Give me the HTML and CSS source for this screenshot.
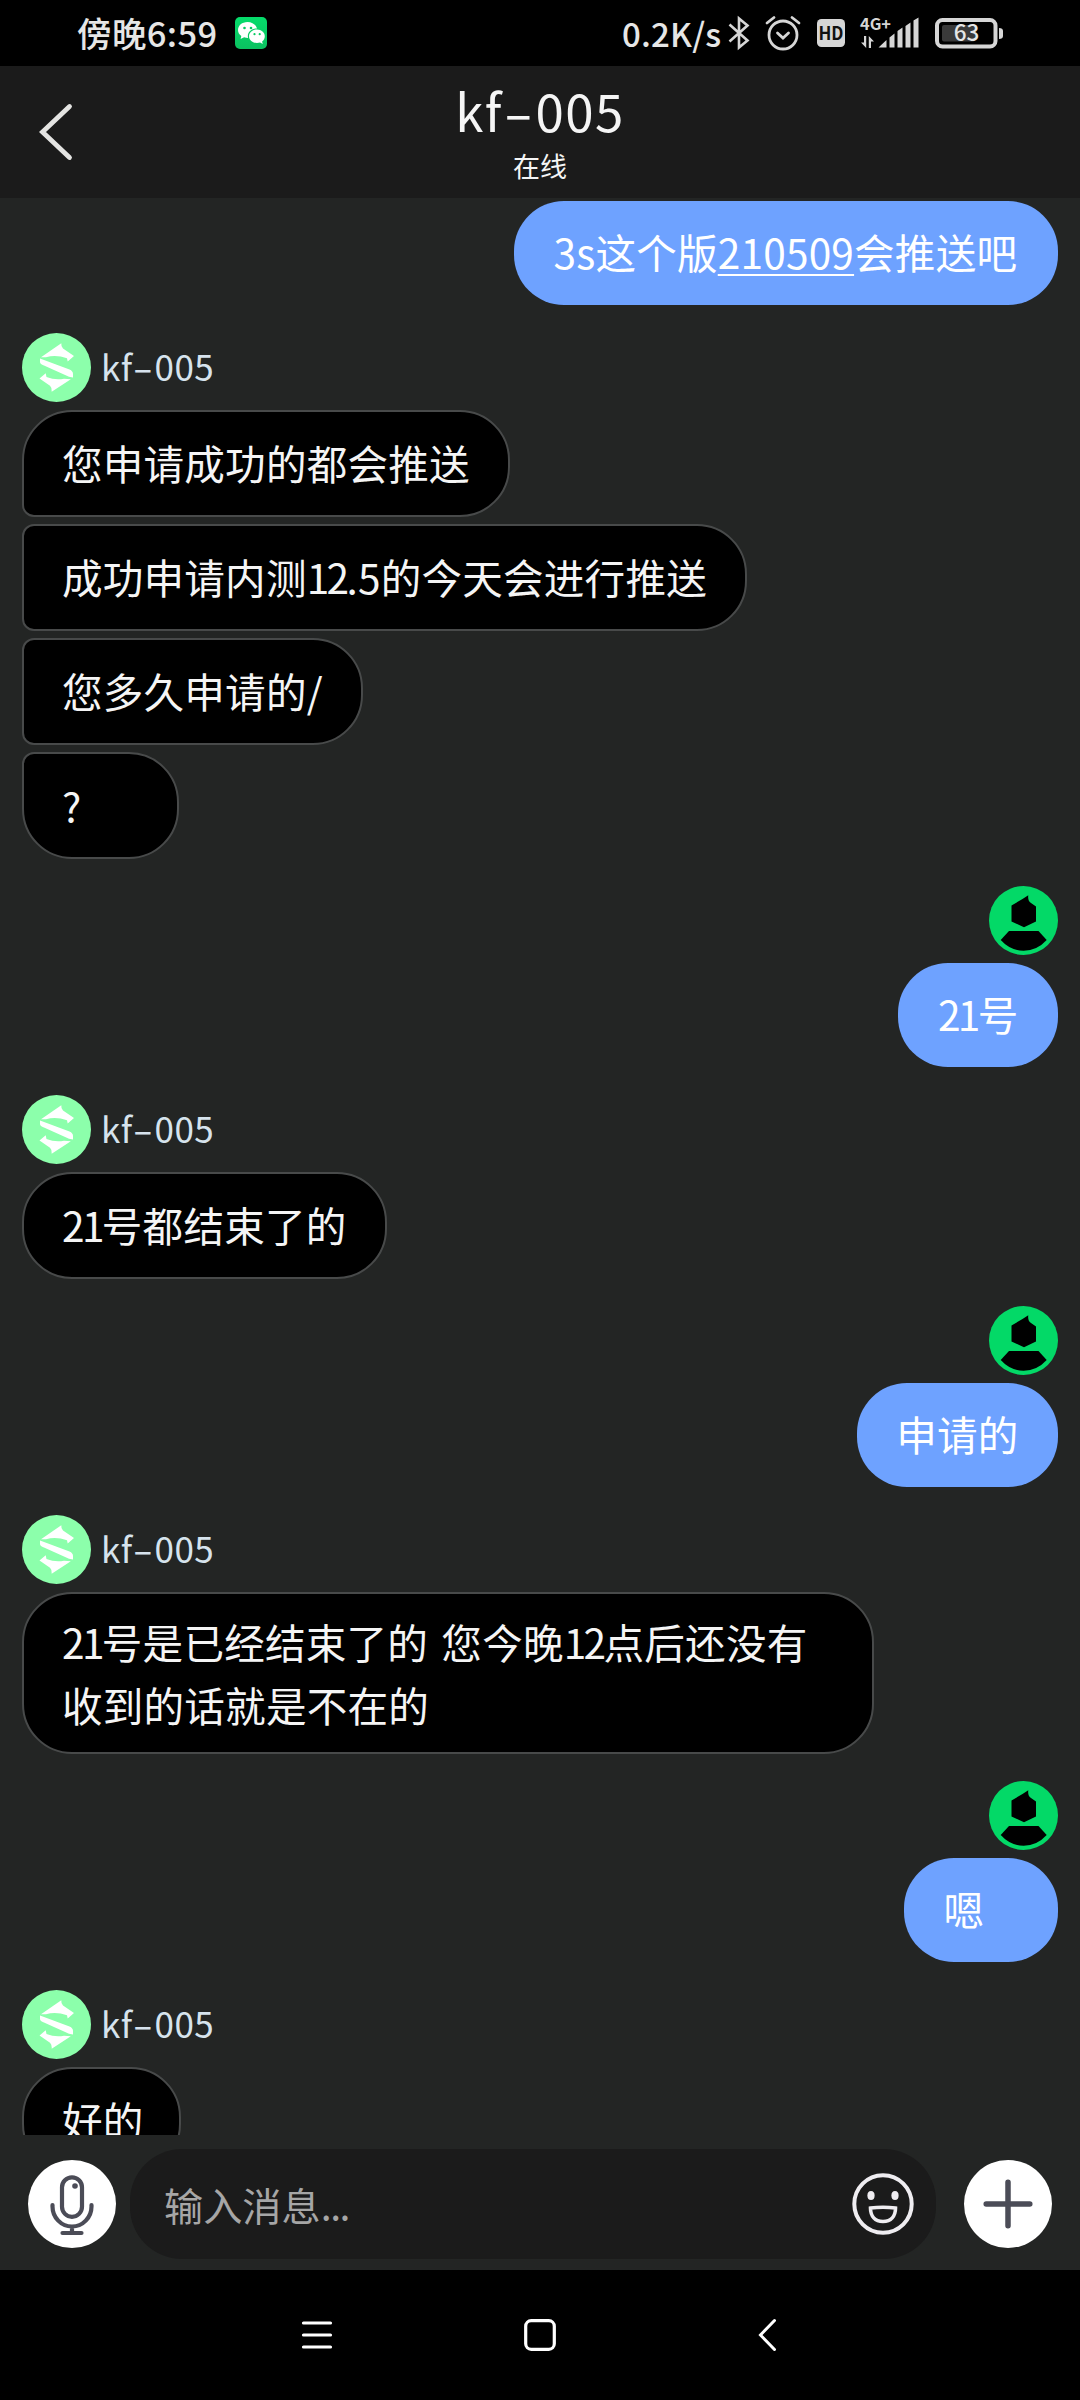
FILE: index.html
```html
<!DOCTYPE html>
<html lang="zh-CN">
<head>
<meta charset="utf-8">
<title>kf-005</title>
<link rel="stylesheet" href="styles.css">
</head>
<body>
<svg class="defs" width="0" height="0">
  <symbol id="agent" viewBox="0 0 69 69">
    <circle cx="34.5" cy="34.5" r="34.5" fill="#8cffab"/>
    <g fill="#fff">
      <path d="M19 24.3 39.3 10.3Q39 14 41 15.500L52 23 45.700 28.500 45 25.300Q34 21.500 24 24.300Z"/>
      <path d="M18 25.500 47.500 36.500Q51 38 51 41L51 44.500 47 43.800 22 32.500Q18 31 18 29Z"/>
      <path d="M17.500 45.500 23.700 40.300 24.500 44Q33 47.500 42 45.800L48.800 46.200 29.700 58.700Q30 54.500 28 52.800Z"/>
    </g>
  </symbol>
  <symbol id="user" viewBox="0 0 69 69">
    <circle cx="34.5" cy="34.5" r="34.5" fill="#03d967"/>
    <path d="M22.500 19.500 33.500 13 39.300 9.300Q38.500 14.500 42 17L47 20.500V35.500L35 41.300 22.500 35.500Z"/>
    <path d="M20 45H49.500L57.700 54Q48 64.700 34.700 64.700T11.700 54Z"/>
  </symbol>
</svg>
<div class="screen">
  <div class="status">
    <span class="clock">傍晚6:59</span>
    <svg class="wechat" width="32" height="32" viewBox="0 0 32 32">
      <defs><linearGradient id="g" x2="0" y2="1"><stop stop-color="#05dc6b"/><stop offset="1" stop-color="#0bc160"/></linearGradient></defs>
      <rect width="32" height="32" rx="5" fill="url(#g)"/>
      <path d="M12.500 5C7 5 3 8.600 3 13c0 2.500 1.300 4.600 3.300 6.100L5.600 22l3.500-1.700c1.300.4 2.600.6 4 .6-1.300-4.800 2.600-9.600 8.900-9.400C21 7.700 17.200 5 12.500 5Z" fill="#fff"/>
      <path d="M22 12.500c-4.500 0-8 3-8 6.700s3.500 6.700 8 6.700c1.100 0 2.100-.2 3.100-.5l2.700 1.500-.7-2.500c1.700-1.200 2.700-3.100 2.700-5.200 0-3.700-3.400-6.700-7.800-6.700Z" fill="#fff"/>
      <g fill="#08ca63"><circle cx="9.500" cy="11" r="1.300"/><circle cx="16" cy="11" r="1.300"/><circle cx="19.500" cy="17.200" r="1.100"/><circle cx="24.700" cy="17.200" r="1.100"/></g>
    </svg>
    <span class="speed">0.2K/s</span>
    <svg class="bt" width="22" height="34" viewBox="0 0 22 34" fill="none" stroke="#d6d6d6" stroke-width="2.600"><path d="M1.500 8.500 19.500 24.500 11 31.500V2.500L19.500 9.500 1.500 25.500"/></svg>
    <svg class="alarm" width="36" height="36" viewBox="0 0 36 36" fill="none" stroke="#d6d6d6" stroke-width="2.800" stroke-linecap="round"><circle cx="18" cy="20" r="14"/><path d="M12.500 18 18 23 23.500 18M2 8 9 2.500M34 8 27 2.500"/></svg>
    <svg class="hd" width="28" height="28" viewBox="0 0 28 28"><rect width="28" height="28" rx="4.500" fill="#d6d6d6"/><text x="14" y="20.700" text-anchor="middle" font-size="18" font-weight="600" textLength="25" lengthAdjust="spacingAndGlyphs" fill="#111">HD</text></svg>
    <svg class="signal" width="60" height="34" viewBox="0 0 60 34" fill="#d6d6d6"><text x="0" y="14" font-size="16" font-weight="700" textLength="31" lengthAdjust="spacingAndGlyphs">4G+</text>
      <path d="M4 20h2.200v12L1 26.500h3zM8.800 20l5.200 5.500h-3V32H8.800zM18.500 31.500l8-7.500v7.500zM29.500 21.500l5-4v14h-5zM37.500 15l5-3.500v20h-5zM45.500 10l5-3.500v25h-5zM53.500 4.500l5-3v30h-5z"/></svg>
    <svg class="battery" width="69" height="32" viewBox="0 0 69 32"><rect x="2" y="3" width="58.500" height="26.500" rx="5.500" fill="none" stroke="#d6d6d6" stroke-width="4"/><rect x="7" y="8" width="33" height="16.500" rx="2" fill="#3a3a3a"/><path d="M64 11q4 0 4 3v5q0 3-4 3z" fill="#d6d6d6"/><text x="31.500" y="24.300" text-anchor="middle" font-size="22.500" font-weight="500" fill="#e6e6e6">63</text></svg>
  </div>

  <header class="header">
    <svg class="back" width="34" height="60" viewBox="0 0 34 60" fill="none" stroke="#e4e4e2" stroke-width="4.800" stroke-linecap="round"><path d="M30.500 4.500 3.500 30 30.500 55.500"/></svg>
    <div class="heading">
      <h1 class="title">kf<span class="dash">-</span>005</h1>
      <p class="presence">在线</p>
    </div>
  </header>

  <main class="chat">
    <section class="group mine">
      <div class="bubble wide">3s这个版<u>210509</u>会推送吧</div>
    </section>
    <section class="group">
      <div class="sender"><svg class="avatar"><use href="#agent"/></svg><span class="name">kf<span class="dash">-</span>005</span></div>
      <div class="bubble first">您申请成功的都会推送</div>
      <div class="bubble mid">成功申请内测<span class="num">12</span>.5的今天会进行推送</div>
      <div class="bubble mid">您多久申请的/</div>
      <div class="bubble last">?</div>
    </section>
    <section class="group mine">
      <svg class="avatar"><use href="#user"/></svg>
      <div class="bubble"><span class="num">21</span>号</div>
    </section>
    <section class="group">
      <div class="sender"><svg class="avatar"><use href="#agent"/></svg><span class="name">kf<span class="dash">-</span>005</span></div>
      <div class="bubble"><span class="num">21</span>号都结束了的</div>
    </section>
    <section class="group mine">
      <svg class="avatar"><use href="#user"/></svg>
      <div class="bubble">申请的</div>
    </section>
    <section class="group">
      <div class="sender"><svg class="avatar"><use href="#agent"/></svg><span class="name">kf<span class="dash">-</span>005</span></div>
      <div class="bubble long"><span class="num">21</span>号是已经结束了的 您今晚<span class="num">12</span>点后还没有<br>收到的话就是不在的</div>
    </section>
    <section class="group mine">
      <svg class="avatar"><use href="#user"/></svg>
      <div class="bubble">嗯</div>
    </section>
    <section class="group">
      <div class="sender"><svg class="avatar"><use href="#agent"/></svg><span class="name">kf<span class="dash">-</span>005</span></div>
      <div class="bubble short">好的</div>
    </section>
  </main>

  <footer class="composer">
    <svg class="round" viewBox="0 0 88 88" fill="none" stroke="#4b4c57" stroke-width="4.200" stroke-linecap="round"><circle cx="44" cy="44" r="44" fill="#fff" stroke="none"/><rect x="34" y="17.300" width="20" height="39.500" rx="10"/><path d="M24.500 45v1.500a19.500 20 0 0 0 39 0V45M44 67v5M34.500 73h19"/><circle cx="47" cy="26" r="2.800" fill="#4b4c57" stroke="none"/></svg>
    <div class="field">
      <span class="placeholder">输入消息<span class="dots">...</span></span>
      <svg class="emoji" width="62" height="62" viewBox="0 0 62 62" fill="none" stroke="#efedf1" stroke-width="4"><circle cx="31" cy="31" r="28.700"/><ellipse cx="19" cy="22.500" rx="3.600" ry="4.500" fill="#efedf1" stroke="none"/><ellipse cx="43" cy="22.500" rx="3.600" ry="4.500" fill="#efedf1" stroke="none"/><path d="M18.500 35Q31 33.500 43.500 35C43.500 43 39 48.500 31 48.500S18.500 43 18.500 35Z" stroke-width="3.600"/></svg>
    </div>
    <svg class="round" viewBox="0 0 88 88" fill="none" stroke="#4b4c57" stroke-width="5.500" stroke-linecap="round"><circle cx="44" cy="44" r="44" fill="#fff" stroke="none"/><path d="M44 22.200v43.600M22.200 44h43.600"/></svg>
  </footer>

  <nav class="nav">
    <svg width="30" height="30" viewBox="0 0 30 30" stroke="#fff" stroke-width="3.200" stroke-linecap="round"><path d="M1.500 3h27M1.500 15h27M1.500 27h27"/></svg>
    <svg class="home" width="32" height="32" viewBox="0 0 32 32" fill="none" stroke="#fff" stroke-width="3.200"><rect x="1.700" y="1.700" width="28.600" height="28.600" rx="5.500"/></svg>
    <svg class="prev" width="19" height="34" viewBox="0 0 19 34" fill="none" stroke="#fff" stroke-width="3" stroke-linecap="round"><path d="M16.500 2.500 2.500 17 16.500 31.500"/></svg>
  </nav>
</div>
</body>
</html>
```
FILE: styles.css
```css
* { box-sizing: border-box; }

body {
  margin: 0;
  background: #000;
  font-family: "Noto Sans CJK SC", sans-serif;
  color: #f5f5f5;
}

svg { display: block; flex: none; overflow: visible; }
.defs { position: absolute; }

.screen {
  display: flex;
  flex-direction: column;
  width: 1080px;
  height: 2400px;
  overflow: hidden;
  background: #232524;
}

.status {
  display: flex;
  align-items: center;
  flex: none;
  height: 66px;
  padding-left: 77px;
  background: #000;
  color: #e6e6e6;
  font-weight: 500;
  white-space: nowrap;
}
.clock { width: 158px; padding-bottom: 2px; font-size: 34.500px; letter-spacing: .4px; }
.speed { width: 106px; margin-left: 355px; padding-bottom: 1px; font-size: 33px; letter-spacing: .200px; }
.alarm { margin-left: 15px; }
.hd { margin-left: 16px; }
.signal { margin-left: 15px; }
.battery { margin-left: 15px; }

.header {
  display: flex;
  align-items: center;
  flex: none;
  height: 132px;
  padding-left: 39px;
  background: #1b1b1b;
}
.heading { flex: 1; margin-right: 73px; text-align: center; }
.title { margin: -3px 0 0; font-size: 51px; font-weight: 400; line-height: 64px; letter-spacing: 1.500px; }
.presence { margin: 6px 0 0; font-size: 27px; line-height: 36px; }
.dash { display: inline-block; transform: scaleX(1.700); margin: 0 .130em; }

.chat {
  display: flex;
  flex-direction: column;
  flex: none;
  gap: 28px;
  height: 1937px;
  padding: 4px 22px 0;
  overflow: hidden;
}
.group { display: flex; flex-direction: column; align-items: flex-start; flex: none; gap: 7px; }
.mine { align-items: flex-end; gap: 8px; margin-top: -1px; }
.sender { display: flex; align-items: center; gap: 10px; height: 69px; margin-bottom: 1px; }
.avatar { width: 69px; height: 69px; }
.name { padding-bottom: 3px; color: #d6e3ed; font-size: 35px; line-height: 66px; letter-spacing: .500px; }

.bubble {
  min-width: 157px;
  height: 107px;
  padding: 18.500px 38px;
  border: 2px solid #484a4a;
  border-radius: 50px;
  background: #000;
  font-size: 40.600px;
  line-height: 64px;
  letter-spacing: .200px;
  white-space: nowrap;
}
.mine .bubble {
  min-width: 154px;
  height: 104px;
  padding: 19px 39.500px;
  border: 0;
  background: #6ea2ff;
  color: #fff;
}
.num { letter-spacing: -2.600px; }
.bubble u { text-underline-offset: 5px; text-decoration-thickness: 2px; }
.mine .wide { width: 544px; }
.first { border-bottom-left-radius: 12px; }
.mid { border-top-left-radius: 12px; border-bottom-left-radius: 12px; }
.last { border-top-left-radius: 12px; }
.long { width: 852px; height: 162px; padding-top: 16px; line-height: 63px; word-spacing: 4px; }
.short { width: 159px; }

.composer {
  display: flex;
  align-items: center;
  flex: none;
  gap: 14px;
  height: 135px;
  padding: 3px 28px 0;
}
.round { width: 88px; height: 88px; }
.field {
  display: flex;
  align-items: center;
  justify-content: space-between;
  width: 806px;
  height: 110px;
  margin-right: 14px;
  padding: 0 22px 0 34px;
  border-radius: 52px;
  background: #1b1b1b;
}
.placeholder { color: #a6a6a6; font-size: 39.200px; line-height: 56px; }
.dots { letter-spacing: -1.500px; }

.nav {
  display: flex;
  align-items: center;
  flex: none;
  height: 130px;
  padding-left: 302px;
  background: #000;
}
.home { margin-left: 192px; }
.prev { margin-left: 202px; }
```
